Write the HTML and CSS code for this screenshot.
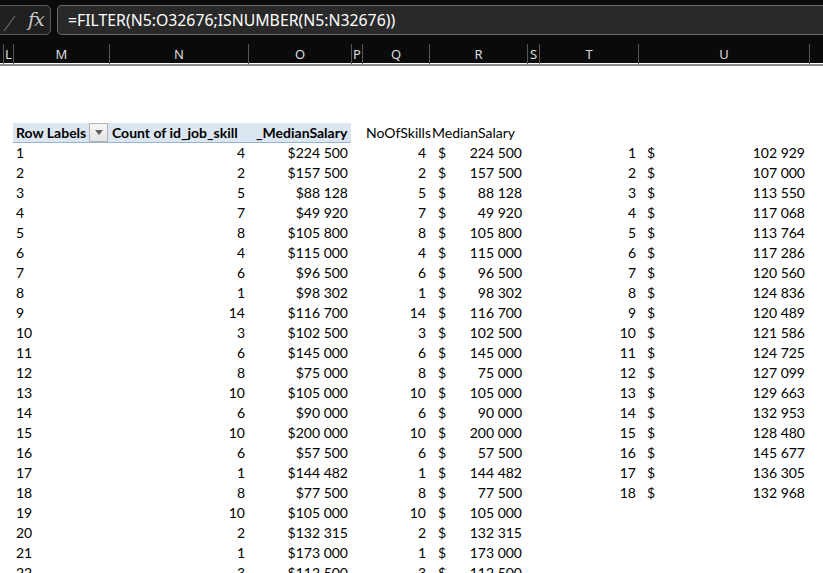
FILE: index.html
```html
<!DOCTYPE html>
<html>
<head>
<meta charset="utf-8">
<link rel="stylesheet" href="styles.css">
</head>
<body>
<div class="topbar">
  <div class="fbar">
    <div class="fxbox">
      <svg class="slash" width="14" height="30" viewBox="0 0 14 30"><line x1="1" y1="25" x2="12" y2="10" stroke="#6a6a6a" stroke-width="1.2"/></svg>
      <span class="fx">fx</span>
    </div>
    <div class="finput">=FILTER(N5:O32676;ISNUMBER(N5:N32676))</div>
  </div>
  <div class="colhdr">
    <span class="ch"></span>
    <span class="ch">L</span>
    <span class="ch">M</span>
    <span class="ch">N</span>
    <span class="ch">O</span>
    <span class="ch">P</span>
    <span class="ch">Q</span>
    <span class="ch">R</span>
    <span class="ch">S</span>
    <span class="ch">T</span>
    <span class="ch">U</span>
    <span class="ch last"></span>
  </div>
</div>
<div class="sheet">
  <div class="row"></div>
  <div class="row"></div>
  <div class="row"></div>
  <div class="row">
    <span class="m ph bold lbl">Row Labels<span class="dd"><svg width="8" height="5" viewBox="0 0 8 5"><path d="M0 0H8L4 5Z" fill="#5f5f5f"/></svg></span></span>
    <span class="n ph bold left">Count of id_job_skill</span>
    <span class="o ph bold hdro">_MedianSalary</span>
    <span class="q left hq">NoOfSkills</span>
    <span class="r left hr">MedianSalary</span>
  </div>
  <div class="row"><span class="m">1</span><span class="n">4</span><span class="o">$224 500</span><span class="q">4</span><span class="r"><i>$</i><b>224 500</b></span><span class="t">1</span><span class="u"><i>$</i><b>102 929</b></span></div>
  <div class="row"><span class="m">2</span><span class="n">2</span><span class="o">$157 500</span><span class="q">2</span><span class="r"><i>$</i><b>157 500</b></span><span class="t">2</span><span class="u"><i>$</i><b>107 000</b></span></div>
  <div class="row"><span class="m">3</span><span class="n">5</span><span class="o">$88 128</span><span class="q">5</span><span class="r"><i>$</i><b>88 128</b></span><span class="t">3</span><span class="u"><i>$</i><b>113 550</b></span></div>
  <div class="row"><span class="m">4</span><span class="n">7</span><span class="o">$49 920</span><span class="q">7</span><span class="r"><i>$</i><b>49 920</b></span><span class="t">4</span><span class="u"><i>$</i><b>117 068</b></span></div>
  <div class="row"><span class="m">5</span><span class="n">8</span><span class="o">$105 800</span><span class="q">8</span><span class="r"><i>$</i><b>105 800</b></span><span class="t">5</span><span class="u"><i>$</i><b>113 764</b></span></div>
  <div class="row"><span class="m">6</span><span class="n">4</span><span class="o">$115 000</span><span class="q">4</span><span class="r"><i>$</i><b>115 000</b></span><span class="t">6</span><span class="u"><i>$</i><b>117 286</b></span></div>
  <div class="row"><span class="m">7</span><span class="n">6</span><span class="o">$96 500</span><span class="q">6</span><span class="r"><i>$</i><b>96 500</b></span><span class="t">7</span><span class="u"><i>$</i><b>120 560</b></span></div>
  <div class="row"><span class="m">8</span><span class="n">1</span><span class="o">$98 302</span><span class="q">1</span><span class="r"><i>$</i><b>98 302</b></span><span class="t">8</span><span class="u"><i>$</i><b>124 836</b></span></div>
  <div class="row"><span class="m">9</span><span class="n">14</span><span class="o">$116 700</span><span class="q">14</span><span class="r"><i>$</i><b>116 700</b></span><span class="t">9</span><span class="u"><i>$</i><b>120 489</b></span></div>
  <div class="row"><span class="m">10</span><span class="n">3</span><span class="o">$102 500</span><span class="q">3</span><span class="r"><i>$</i><b>102 500</b></span><span class="t">10</span><span class="u"><i>$</i><b>121 586</b></span></div>
  <div class="row"><span class="m">11</span><span class="n">6</span><span class="o">$145 000</span><span class="q">6</span><span class="r"><i>$</i><b>145 000</b></span><span class="t">11</span><span class="u"><i>$</i><b>124 725</b></span></div>
  <div class="row"><span class="m">12</span><span class="n">8</span><span class="o">$75 000</span><span class="q">8</span><span class="r"><i>$</i><b>75 000</b></span><span class="t">12</span><span class="u"><i>$</i><b>127 099</b></span></div>
  <div class="row"><span class="m">13</span><span class="n">10</span><span class="o">$105 000</span><span class="q">10</span><span class="r"><i>$</i><b>105 000</b></span><span class="t">13</span><span class="u"><i>$</i><b>129 663</b></span></div>
  <div class="row"><span class="m">14</span><span class="n">6</span><span class="o">$90 000</span><span class="q">6</span><span class="r"><i>$</i><b>90 000</b></span><span class="t">14</span><span class="u"><i>$</i><b>132 953</b></span></div>
  <div class="row"><span class="m">15</span><span class="n">10</span><span class="o">$200 000</span><span class="q">10</span><span class="r"><i>$</i><b>200 000</b></span><span class="t">15</span><span class="u"><i>$</i><b>128 480</b></span></div>
  <div class="row"><span class="m">16</span><span class="n">6</span><span class="o">$57 500</span><span class="q">6</span><span class="r"><i>$</i><b>57 500</b></span><span class="t">16</span><span class="u"><i>$</i><b>145 677</b></span></div>
  <div class="row"><span class="m">17</span><span class="n">1</span><span class="o">$144 482</span><span class="q">1</span><span class="r"><i>$</i><b>144 482</b></span><span class="t">17</span><span class="u"><i>$</i><b>136 305</b></span></div>
  <div class="row"><span class="m">18</span><span class="n">8</span><span class="o">$77 500</span><span class="q">8</span><span class="r"><i>$</i><b>77 500</b></span><span class="t">18</span><span class="u"><i>$</i><b>132 968</b></span></div>
  <div class="row"><span class="m">19</span><span class="n">10</span><span class="o">$105 000</span><span class="q">10</span><span class="r"><i>$</i><b>105 000</b></span></div>
  <div class="row"><span class="m">20</span><span class="n">2</span><span class="o">$132 315</span><span class="q">2</span><span class="r"><i>$</i><b>132 315</b></span></div>
  <div class="row"><span class="m">21</span><span class="n">1</span><span class="o">$173 000</span><span class="q">1</span><span class="r"><i>$</i><b>173 000</b></span></div>
  <div class="row"><span class="m">22</span><span class="n">3</span><span class="o">$112 500</span><span class="q">3</span><span class="r"><i>$</i><b>112 500</b></span></div>
</div>
</body>
</html>
```
FILE: styles.css
```css
html, body {
  margin: 0;
  padding: 0;
  width: 823px;
  height: 573px;
  overflow: hidden;
  background: #ffffff;
}
.topbar {
  background: #0a0a0a;
  height: 63px;
  display: flex;
  flex-direction: column;
}
.fbar {
  display: flex;
  padding-top: 5px;
  height: 30px;
  gap: 6px;
}
.fxbox {
  width: 54px;
  margin-left: -5px;
  height: 28px;
  border: 1px solid #5a5a5a;
  border-radius: 5px;
  background: #202020;
  display: flex;
  align-items: center;
  box-sizing: content-box;
}
.slash {
  margin-left: 7px;
  margin-top: 1px;
}
.fx {
  font-family: "DejaVu Serif", "Liberation Serif", serif;
  font-style: italic;
  font-size: 19px;
  color: #c8c8c8;
  margin-left: 11px;
  margin-top: -3px;
  letter-spacing: -1px;
}
.finput {
  flex: 1;
  height: 28px;
  border: 1px solid #6a6a6a;
  border-right: none;
  border-radius: 5px 0 0 5px;
  background: #292929;
  color: #ffffff;
  font-family: "Noto Sans", "Open Sans", sans-serif;
  font-size: 15.8px;
  line-height: 28px;
  padding-left: 10px;
  box-sizing: content-box;
  white-space: nowrap;
}
.colhdr {
  margin-top: 6px;
  flex: 1;
  display: grid;
  grid-template-columns: 3px 10px 96px 139px 103px 11px 67px 98px 12px 99px 171px 1fr;
  border-bottom: 2px solid #8c8c8c;
}
.ch {
  border-left: 1px solid #555555;
  color: #dcdcdc;
  font-family: "Noto Sans", "Open Sans", sans-serif;
  font-size: 13px;
  line-height: 20px;
  text-align: center;
  margin-top: 3px;
}
.ch:first-child {
  border-left: none;
}
.sheet {
  font-family: "Lato", "Liberation Sans", sans-serif;
  font-size: 14px;
  color: #000000;
}
.row {
  display: grid;
  grid-template-columns: 3px 10px 96px 139px 103px 11px 67px 98px 12px 99px 171px 1fr;
  height: 20px;
  line-height: 20px;
  white-space: nowrap;
}
.row > span {
  text-align: right;
  padding: 0 3px;
  overflow: visible;
}
.m { grid-column: 3; text-align: left !important; }
.n { grid-column: 4; }
.o { grid-column: 5; }
.q { grid-column: 7; }
.r { grid-column: 8; }
.t { grid-column: 10; }
.u { grid-column: 11; }
.r, .u {
  display: flex;
  justify-content: space-between;
}
.r { padding: 0 5px 0 9px !important; }
.u { padding: 0 4px 0 9px !important; }
.r i, .u i, .r b, .u b {
  font-style: normal;
  font-weight: normal;
}
.t { padding-right: 2px !important; }
.ph {
  background: #dce6f1;
  border-bottom: 1px solid #95b3d7;
  height: 19px;
  line-height: 19px;
  margin-top: 0;
}
.bold { font-weight: bold; }
.left { text-align: left !important; }
.lbl {
  display: flex;
  align-items: center;
  justify-content: space-between;
  padding-right: 1px !important;
}
.dd {
  width: 17px;
  height: 17px;
  border: 1px solid #b4b4b4;
  background: linear-gradient(#f7f7f7, #e4e4e4);
  display: flex;
  align-items: center;
  justify-content: center;
}
.hdro { text-align: left !important; padding-left: 8px !important; }
.hq { padding-left: 4px !important; overflow: visible; }
.hr { padding-left: 3px !important; }
```
